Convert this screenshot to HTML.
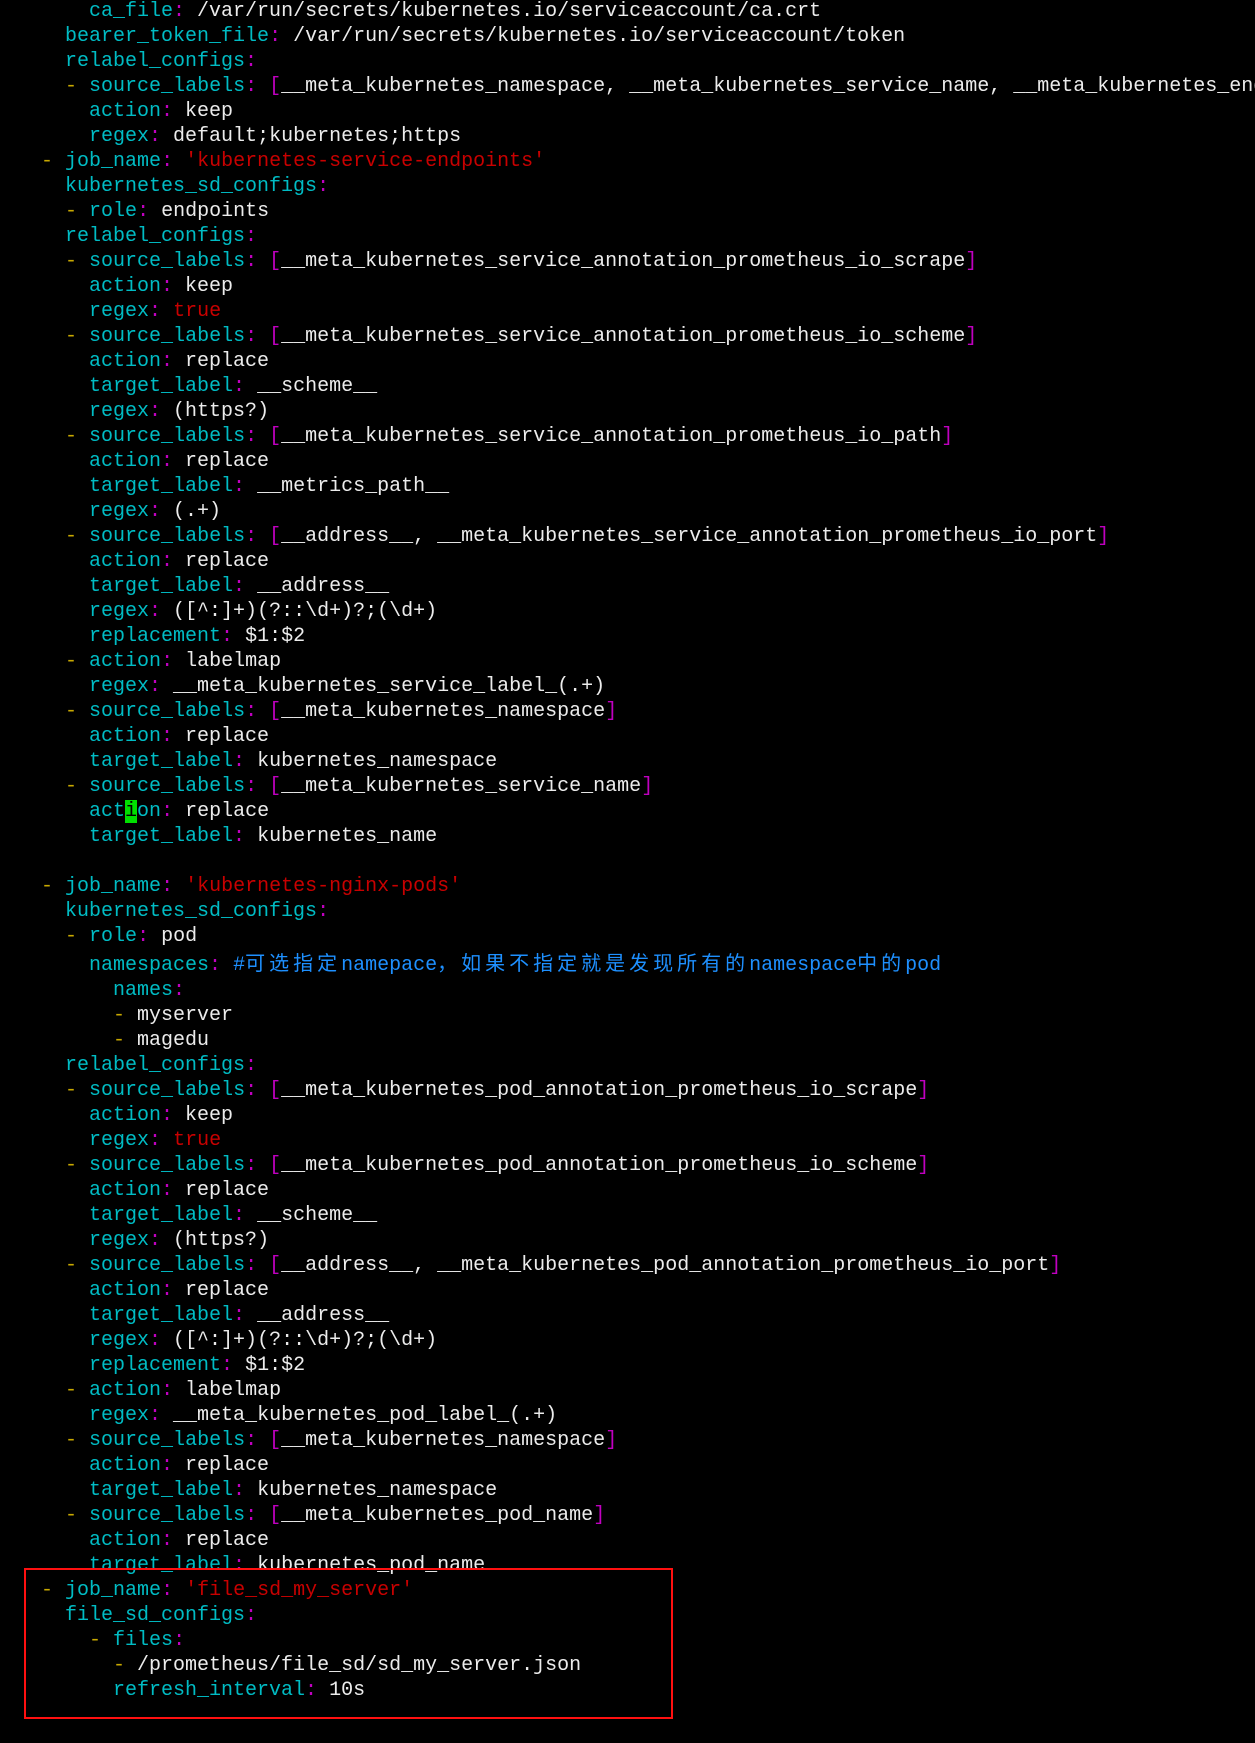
<!DOCTYPE html>
<html><head><meta charset="utf-8"><style>
html,body{margin:0;padding:0;background:#000;}
body{width:1255px;height:1743px;overflow:hidden;position:relative;}
pre{margin:0;position:absolute;left:17px;top:-1px;font-family:"Liberation Mono","DejaVu Sans Mono",monospace;font-size:20px;line-height:25px;color:#ececec;white-space:pre;}
.k{color:#00bcc4}.d{color:#c8a800}.c{color:#c000c0}.s{color:#c80000}.m{color:#1e90ff}
.z{font-family:"Noto Sans CJK SC",sans-serif;letter-spacing:4px;}
.cur{background:#00e000;color:#000}
.box{position:absolute;left:24px;top:1568px;width:645px;height:147px;border:2px solid #ff1010;}
</style></head><body>
<pre>      <span class="k">ca_file</span><span class="c">:</span> /var/run/secrets/kubernetes.io/serviceaccount/ca.crt
    <span class="k">bearer_token_file</span><span class="c">:</span> /var/run/secrets/kubernetes.io/serviceaccount/token
    <span class="k">relabel_configs</span><span class="c">:</span>
    <span class="d">-</span> <span class="k">source_labels</span><span class="c">:</span> <span class="c">[</span>__meta_kubernetes_namespace, __meta_kubernetes_service_name, __meta_kubernetes_end
      <span class="k">action</span><span class="c">:</span> keep
      <span class="k">regex</span><span class="c">:</span> default;kubernetes;https
  <span class="d">-</span> <span class="k">job_name</span><span class="c">:</span> <span class="s">'kubernetes-service-endpoints'</span>
    <span class="k">kubernetes_sd_configs</span><span class="c">:</span>
    <span class="d">-</span> <span class="k">role</span><span class="c">:</span> endpoints
    <span class="k">relabel_configs</span><span class="c">:</span>
    <span class="d">-</span> <span class="k">source_labels</span><span class="c">:</span> <span class="c">[</span>__meta_kubernetes_service_annotation_prometheus_io_scrape<span class="c">]</span>
      <span class="k">action</span><span class="c">:</span> keep
      <span class="k">regex</span><span class="c">:</span> <span class="s">true</span>
    <span class="d">-</span> <span class="k">source_labels</span><span class="c">:</span> <span class="c">[</span>__meta_kubernetes_service_annotation_prometheus_io_scheme<span class="c">]</span>
      <span class="k">action</span><span class="c">:</span> replace
      <span class="k">target_label</span><span class="c">:</span> __scheme__
      <span class="k">regex</span><span class="c">:</span> (https?)
    <span class="d">-</span> <span class="k">source_labels</span><span class="c">:</span> <span class="c">[</span>__meta_kubernetes_service_annotation_prometheus_io_path<span class="c">]</span>
      <span class="k">action</span><span class="c">:</span> replace
      <span class="k">target_label</span><span class="c">:</span> __metrics_path__
      <span class="k">regex</span><span class="c">:</span> (.+)
    <span class="d">-</span> <span class="k">source_labels</span><span class="c">:</span> <span class="c">[</span>__address__, __meta_kubernetes_service_annotation_prometheus_io_port<span class="c">]</span>
      <span class="k">action</span><span class="c">:</span> replace
      <span class="k">target_label</span><span class="c">:</span> __address__
      <span class="k">regex</span><span class="c">:</span> ([^:]+)(?::\d+)?;(\d+)
      <span class="k">replacement</span><span class="c">:</span> $1:$2
    <span class="d">-</span> <span class="k">action</span><span class="c">:</span> labelmap
      <span class="k">regex</span><span class="c">:</span> __meta_kubernetes_service_label_(.+)
    <span class="d">-</span> <span class="k">source_labels</span><span class="c">:</span> <span class="c">[</span>__meta_kubernetes_namespace<span class="c">]</span>
      <span class="k">action</span><span class="c">:</span> replace
      <span class="k">target_label</span><span class="c">:</span> kubernetes_namespace
    <span class="d">-</span> <span class="k">source_labels</span><span class="c">:</span> <span class="c">[</span>__meta_kubernetes_service_name<span class="c">]</span>
      <span class="k">act</span><span class="cur">i</span><span class="k">on</span><span class="c">:</span> replace
      <span class="k">target_label</span><span class="c">:</span> kubernetes_name

  <span class="d">-</span> <span class="k">job_name</span><span class="c">:</span> <span class="s">'kubernetes-nginx-pods'</span>
    <span class="k">kubernetes_sd_configs</span><span class="c">:</span>
    <span class="d">-</span> <span class="k">role</span><span class="c">:</span> pod
      <span class="k">namespaces</span><span class="c">:</span> <span class="m">#<span class="z">可选指定</span>namepace<span class="z">，如果不指定就是发现所有的</span>namespace<span class="z">中的</span>pod</span>
        <span class="k">names</span><span class="c">:</span>
        <span class="d">-</span> myserver
        <span class="d">-</span> magedu
    <span class="k">relabel_configs</span><span class="c">:</span>
    <span class="d">-</span> <span class="k">source_labels</span><span class="c">:</span> <span class="c">[</span>__meta_kubernetes_pod_annotation_prometheus_io_scrape<span class="c">]</span>
      <span class="k">action</span><span class="c">:</span> keep
      <span class="k">regex</span><span class="c">:</span> <span class="s">true</span>
    <span class="d">-</span> <span class="k">source_labels</span><span class="c">:</span> <span class="c">[</span>__meta_kubernetes_pod_annotation_prometheus_io_scheme<span class="c">]</span>
      <span class="k">action</span><span class="c">:</span> replace
      <span class="k">target_label</span><span class="c">:</span> __scheme__
      <span class="k">regex</span><span class="c">:</span> (https?)
    <span class="d">-</span> <span class="k">source_labels</span><span class="c">:</span> <span class="c">[</span>__address__, __meta_kubernetes_pod_annotation_prometheus_io_port<span class="c">]</span>
      <span class="k">action</span><span class="c">:</span> replace
      <span class="k">target_label</span><span class="c">:</span> __address__
      <span class="k">regex</span><span class="c">:</span> ([^:]+)(?::\d+)?;(\d+)
      <span class="k">replacement</span><span class="c">:</span> $1:$2
    <span class="d">-</span> <span class="k">action</span><span class="c">:</span> labelmap
      <span class="k">regex</span><span class="c">:</span> __meta_kubernetes_pod_label_(.+)
    <span class="d">-</span> <span class="k">source_labels</span><span class="c">:</span> <span class="c">[</span>__meta_kubernetes_namespace<span class="c">]</span>
      <span class="k">action</span><span class="c">:</span> replace
      <span class="k">target_label</span><span class="c">:</span> kubernetes_namespace
    <span class="d">-</span> <span class="k">source_labels</span><span class="c">:</span> <span class="c">[</span>__meta_kubernetes_pod_name<span class="c">]</span>
      <span class="k">action</span><span class="c">:</span> replace
      <span class="k">target_label</span><span class="c">:</span> kubernetes_pod_name
  <span class="d">-</span> <span class="k">job_name</span><span class="c">:</span> <span class="s">'file_sd_my_server'</span>
    <span class="k">file_sd_configs</span><span class="c">:</span>
      <span class="d">-</span> <span class="k">files</span><span class="c">:</span>
        <span class="d">-</span> /prometheus/file_sd/sd_my_server.json
        <span class="k">refresh_interval</span><span class="c">:</span> 10s
</pre>
<div class="box"></div>
</body></html>
